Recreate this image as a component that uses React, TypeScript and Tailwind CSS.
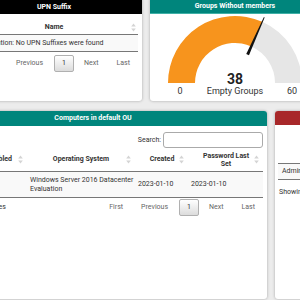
import React from "react";

const Sort = ({ className = "" }: { className?: string }) => (
  <svg width="5" height="9" viewBox="0 0 5 9" className={className}>
    <path d="M2.5 0.5L4.8 3.6H0.2Z" fill="#d4d4d4" />
    <path d="M2.5 8.5L4.8 5.4H0.2Z" fill="#d4d4d4" />
  </svg>
);

const Pager = () => (
  <div className="flex items-center text-[7px] text-[#666]">
    <span className="px-[8px] ml-[2px]">First</span>
    <span className="px-[8px] ml-[2px]">Previous</span>
    <span className="ml-[3px] w-[20px] h-[17px] flex items-center justify-center border border-[#b0b0b0] rounded-[2px] bg-gradient-to-b from-white to-[#dcdcdc] text-[#333]">
      1
    </span>
    <span className="px-[8px] ml-[2px]">Next</span>
    <span className="px-[8px] ml-[2px]">Last</span>
  </div>
);

const Gauge = () => {
  const cx = 85;
  const cy = 69;
  const R = 67;
  const r = 40;
  const f = 38 / 60;
  const t = Math.PI * (1 - f);
  const ox = cx + R * Math.cos(t);
  const oy = cy - R * Math.sin(t);
  const ix = cx + r * Math.cos(t);
  const iy = cy - r * Math.sin(t);
  const c = Math.cos(t);
  const s = Math.sin(t);
  const bx = cx + 31 * c;
  const by = cy - 31 * s;
  const tx = cx + 72 * c;
  const ty = cy - 72 * s;
  const px = s;
  const py = c;
  return (
    <svg width="170" height="86" viewBox="0 0 170 86">
      <path
        d={`M ${cx - R} ${cy} A ${R} ${R} 0 0 1 ${ox} ${oy} L ${ix} ${iy} A ${r} ${r} 0 0 0 ${cx - r} ${cy} Z`}
        fill="#f7941d"
      />
      <path
        d={`M ${ox} ${oy} A ${R} ${R} 0 0 1 ${cx + R} ${cy} L ${cx + r} ${cy} A ${r} ${r} 0 0 0 ${ix} ${iy} Z`}
        fill="#e6e6e6"
      />
      <polygon
        points={`${bx + 1.5 * px},${by + 1.5 * py} ${tx + 0.4 * px},${ty + 0.4 * py} ${tx - 0.4 * px},${ty - 0.4 * py} ${bx - 1.5 * px},${by - 1.5 * py}`}
        fill="#111"
      />
      <text x={cx} y={70} textAnchor="middle" fontSize="14" fontWeight="700" fill="#222" fontFamily="Roboto, sans-serif">
        38
      </text>
      <text x={cx} y={80} textAnchor="middle" fontSize="9" fill="#333" fontFamily="Roboto, sans-serif">
        Empty Groups
      </text>
      <text x={30} y={80} textAnchor="middle" fontSize="9" fill="#333" fontFamily="Roboto, sans-serif">
        0
      </text>
      <text x={142} y={80} textAnchor="middle" fontSize="9" fill="#333" fontFamily="Roboto, sans-serif">
        60
      </text>
    </svg>
  );
};

export default function App() {
  return (
    <div className="w-[300px] h-[300px] overflow-hidden bg-[#ececec] font-['Roboto',sans-serif] text-[#333]">
      {/* Row 1 */}
      <div className="flex gap-[8px] ml-[-34px] mt-[-3px]">
        <div className="w-[176px] h-[104px] shrink-0 bg-white rounded-[3px] shadow-[0_0_3px_rgba(0,0,0,0.3)] overflow-hidden">
          <div className="h-[17px] pt-[3px] bg-black text-white text-[7px] font-bold flex items-center justify-center">
            UPN Suffix
          </div>
          <div className="px-[4px]">
            <div className="relative mt-[6px] h-[15px] flex items-center justify-center border-b border-[#777] text-[7px] font-bold">
              Name
              <Sort className="absolute right-[2px] top-[3px]" />
            </div>
            <div className="h-[17px] flex items-center pl-[6px] bg-[#f9f9f9] border-b border-[#777] text-[7px] whitespace-nowrap">
              Information: No UPN Suffixes were found
            </div>
            <div className="flex justify-end mt-[3px]">
              <Pager />
            </div>
          </div>
        </div>
        <div className="w-[170px] h-[104px] shrink-0 bg-white rounded-[3px] shadow-[0_0_3px_rgba(0,0,0,0.3)] overflow-hidden">
          <div className="h-[17px] pt-[3px] bg-[#00857c] text-white text-[7px] font-bold flex items-center justify-center border-b border-[#3fb0a6]">
            Groups Without members
          </div>
          <Gauge />
        </div>
      </div>

      {/* Row 2 */}
      <div className="flex gap-[8px] ml-[-81px] mt-[10px]">
        <div className="w-[348px] h-[188px] shrink-0 bg-white rounded-[3px] shadow-[0_0_3px_rgba(0,0,0,0.3)] overflow-hidden">
          <div className="h-[15px] bg-[#00857c] text-white text-[7px] font-bold flex items-center justify-center">
            Computers in default OU
          </div>
          <div className="px-[4px]">
            <div className="mt-[6px] flex justify-end items-center gap-[2px] text-[7px]">
              <span>Search:</span>
              <div className="w-[100px] h-[16px] border border-[#aaa] rounded-[3px] bg-white" />
            </div>
            <div className="flex h-[24px] border-b border-[#777] text-[7px] font-bold">
              <div className="relative w-[52px] flex items-center justify-center pr-[10px]">
                Name
                <Sort className="absolute right-[1px] top-[7px]" />
              </div>
              <div className="relative w-[49px] flex items-center justify-center pr-[4px] pl-[4px]">
                Enabled
                <Sort className="absolute right-[1px] top-[7px]" />
              </div>
              <div className="relative w-[108px] flex items-center justify-center pl-[10px] pr-[4px]">
                Operating System
                <Sort className="absolute right-[1px] top-[7px]" />
              </div>
              <div className="relative w-[53px] flex items-center justify-center pl-[9px] pr-[2px]">
                Created
                <Sort className="absolute right-[1px] top-[7px]" />
              </div>
              <div className="relative w-[78px] flex items-center justify-center pl-[8px] pr-[4px] text-center leading-[8px]">
                <span>
                  Password Last
                  <br />
                  Set
                </span>
                <Sort className="absolute right-[4px] top-[7px]" />
              </div>
            </div>
            <div className="flex h-[26px] border-b border-[#777] bg-[#f9f9f9] text-[7px] leading-[9px]">
              <div className="w-[52px] pl-[6px] flex items-center">PC01</div>
              <div className="w-[49px] pl-[6px] flex items-center">True</div>
              <div className="w-[108px] pl-[6px] flex items-center whitespace-nowrap">
                <span>
                  Windows Server 2016 Datacenter
                  <br />
                  Evaluation
                </span>
              </div>
              <div className="w-[53px] pl-[6px] flex items-center">2023-01-10</div>
              <div className="w-[78px] pl-[6px] flex items-center">2023-01-10</div>
            </div>
            <div className="flex justify-between items-center mt-[1px]">
              <span className="text-[7px] whitespace-nowrap">Showing 1 to 1 of 1 entries</span>
              <Pager />
            </div>
          </div>
        </div>
        <div className="w-[200px] h-[188px] shrink-0 bg-white rounded-[3px] shadow-[0_0_3px_rgba(0,0,0,0.3)] overflow-hidden">
          <div className="h-[14px] bg-[#a8282a] text-white text-[7px] font-bold flex items-center justify-center">
            Domain Admins
          </div>
          <div className="px-[3px]">
            <div className="h-[38px]" />
            <div className="border-t border-[#777]" />
            <div className="h-[16px] flex items-center pl-[4px] bg-[#f9f9f9] border-b border-[#777] text-[7px]">
              Administrator
            </div>
            <div className="mt-[7px] pl-[1px] text-[7px]">Showing 1 to 1 of 1 entries</div>
          </div>
        </div>
      </div>
    </div>
  );
}
